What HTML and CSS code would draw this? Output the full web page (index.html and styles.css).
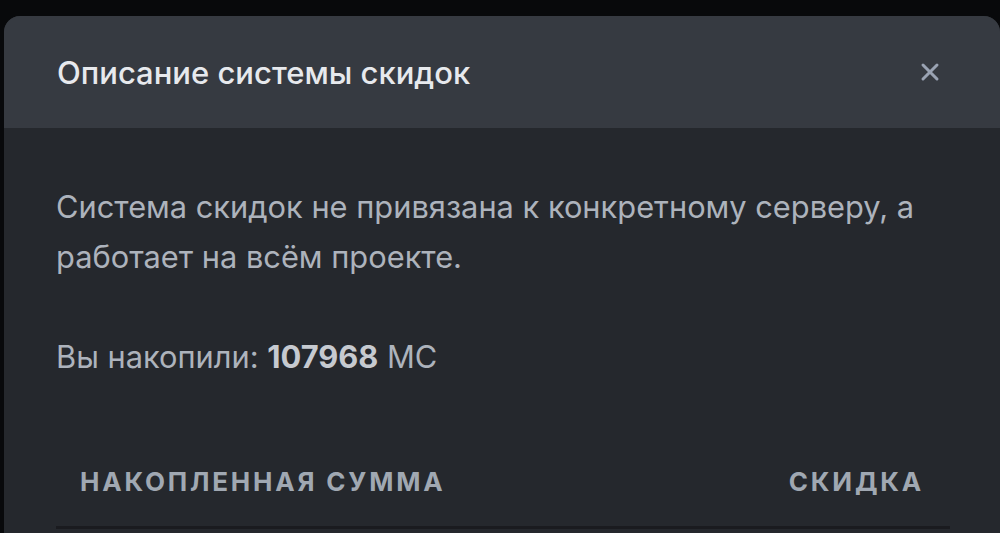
FILE: index.html
```html
<!DOCTYPE html>
<html lang="ru">
<head>
    <meta charset="UTF-8">
    <meta name="viewport" content="width=device-width, initial-scale=1.0">
    <title>Описание системы скидок</title>
    <link rel="stylesheet" href="styles.css">
</head>
<body>
    <div class="modal">
        <header class="modal-header">
            <h1>Описание системы скидок</h1>
            <button class="close-btn" aria-label="Закрыть">
                <svg width="20" height="20" viewBox="0 0 20 20">
                    <path d="M3 3 L17 17 M17 3 L3 17" stroke="#9aa3b3" stroke-width="3" stroke-linecap="round"/>
                </svg>
            </button>
        </header>
        <div class="modal-body">
            <p class="intro">Система скидок не привязана к конкретному серверу, а работает на всём проекте.</p>
            <p class="total">Вы накопили: <strong>107968</strong> МС</p>
            <table class="discount-table">
                <thead>
                    <tr>
                        <th>Накопленная сумма</th>
                        <th class="right">Скидка</th>
                    </tr>
                </thead>
            </table>
        </div>
    </div>
</body>
</html>
```

FILE: styles.css
```css
body {
    background-color: #08090b;
    font-family: 'Inter', 'Liberation Sans', sans-serif;
    margin: 0;
    overflow: hidden;
    height: 533px;
}
.modal {
    margin: 16px 0 0 4px;
    width: 996px;
    height: 517px;
    background-color: #25282d;
    border-radius: 16px 16px 0 0;
    overflow: hidden;
}
.modal-header {
    height: 112px;
    background-color: #363a41;
    padding: 0 60px 0 53px;
    display: flex;
    align-items: center;
    justify-content: space-between;
}
.modal-header h1 {
    margin: 0;
    font-size: 31px;
    font-weight: 500;
    color: #e7e9ed;
}
.close-btn {
    background: none;
    border: none;
    padding: 0;
    width: 20px;
    height: 20px;
    cursor: pointer;
    display: flex;
}
.modal-body {
    padding: 54px 46px 0 52px;
}
.modal-body p {
    margin: 0;
    font-size: 30.8px;
    line-height: 50px;
    color: #adb3bc;
}
.intro {
    width: 880px;
}
.total {
    margin-top: 50px !important;
}
.total strong {
    color: #c6cad0;
}
.discount-table {
    margin-top: 55px;
    width: 894px;
    border-collapse: collapse;
}
.discount-table th {
    text-align: left;
    text-transform: uppercase;
    font-size: 26px;
    font-weight: 700;
    letter-spacing: 2.8px;
    color: #a0a8b2;
    padding: 29px 24px;
    border-bottom: 3px solid #1a1b1f;
}
.discount-table th.right {
    text-align: right;
    padding-right: 26px;
}
```
